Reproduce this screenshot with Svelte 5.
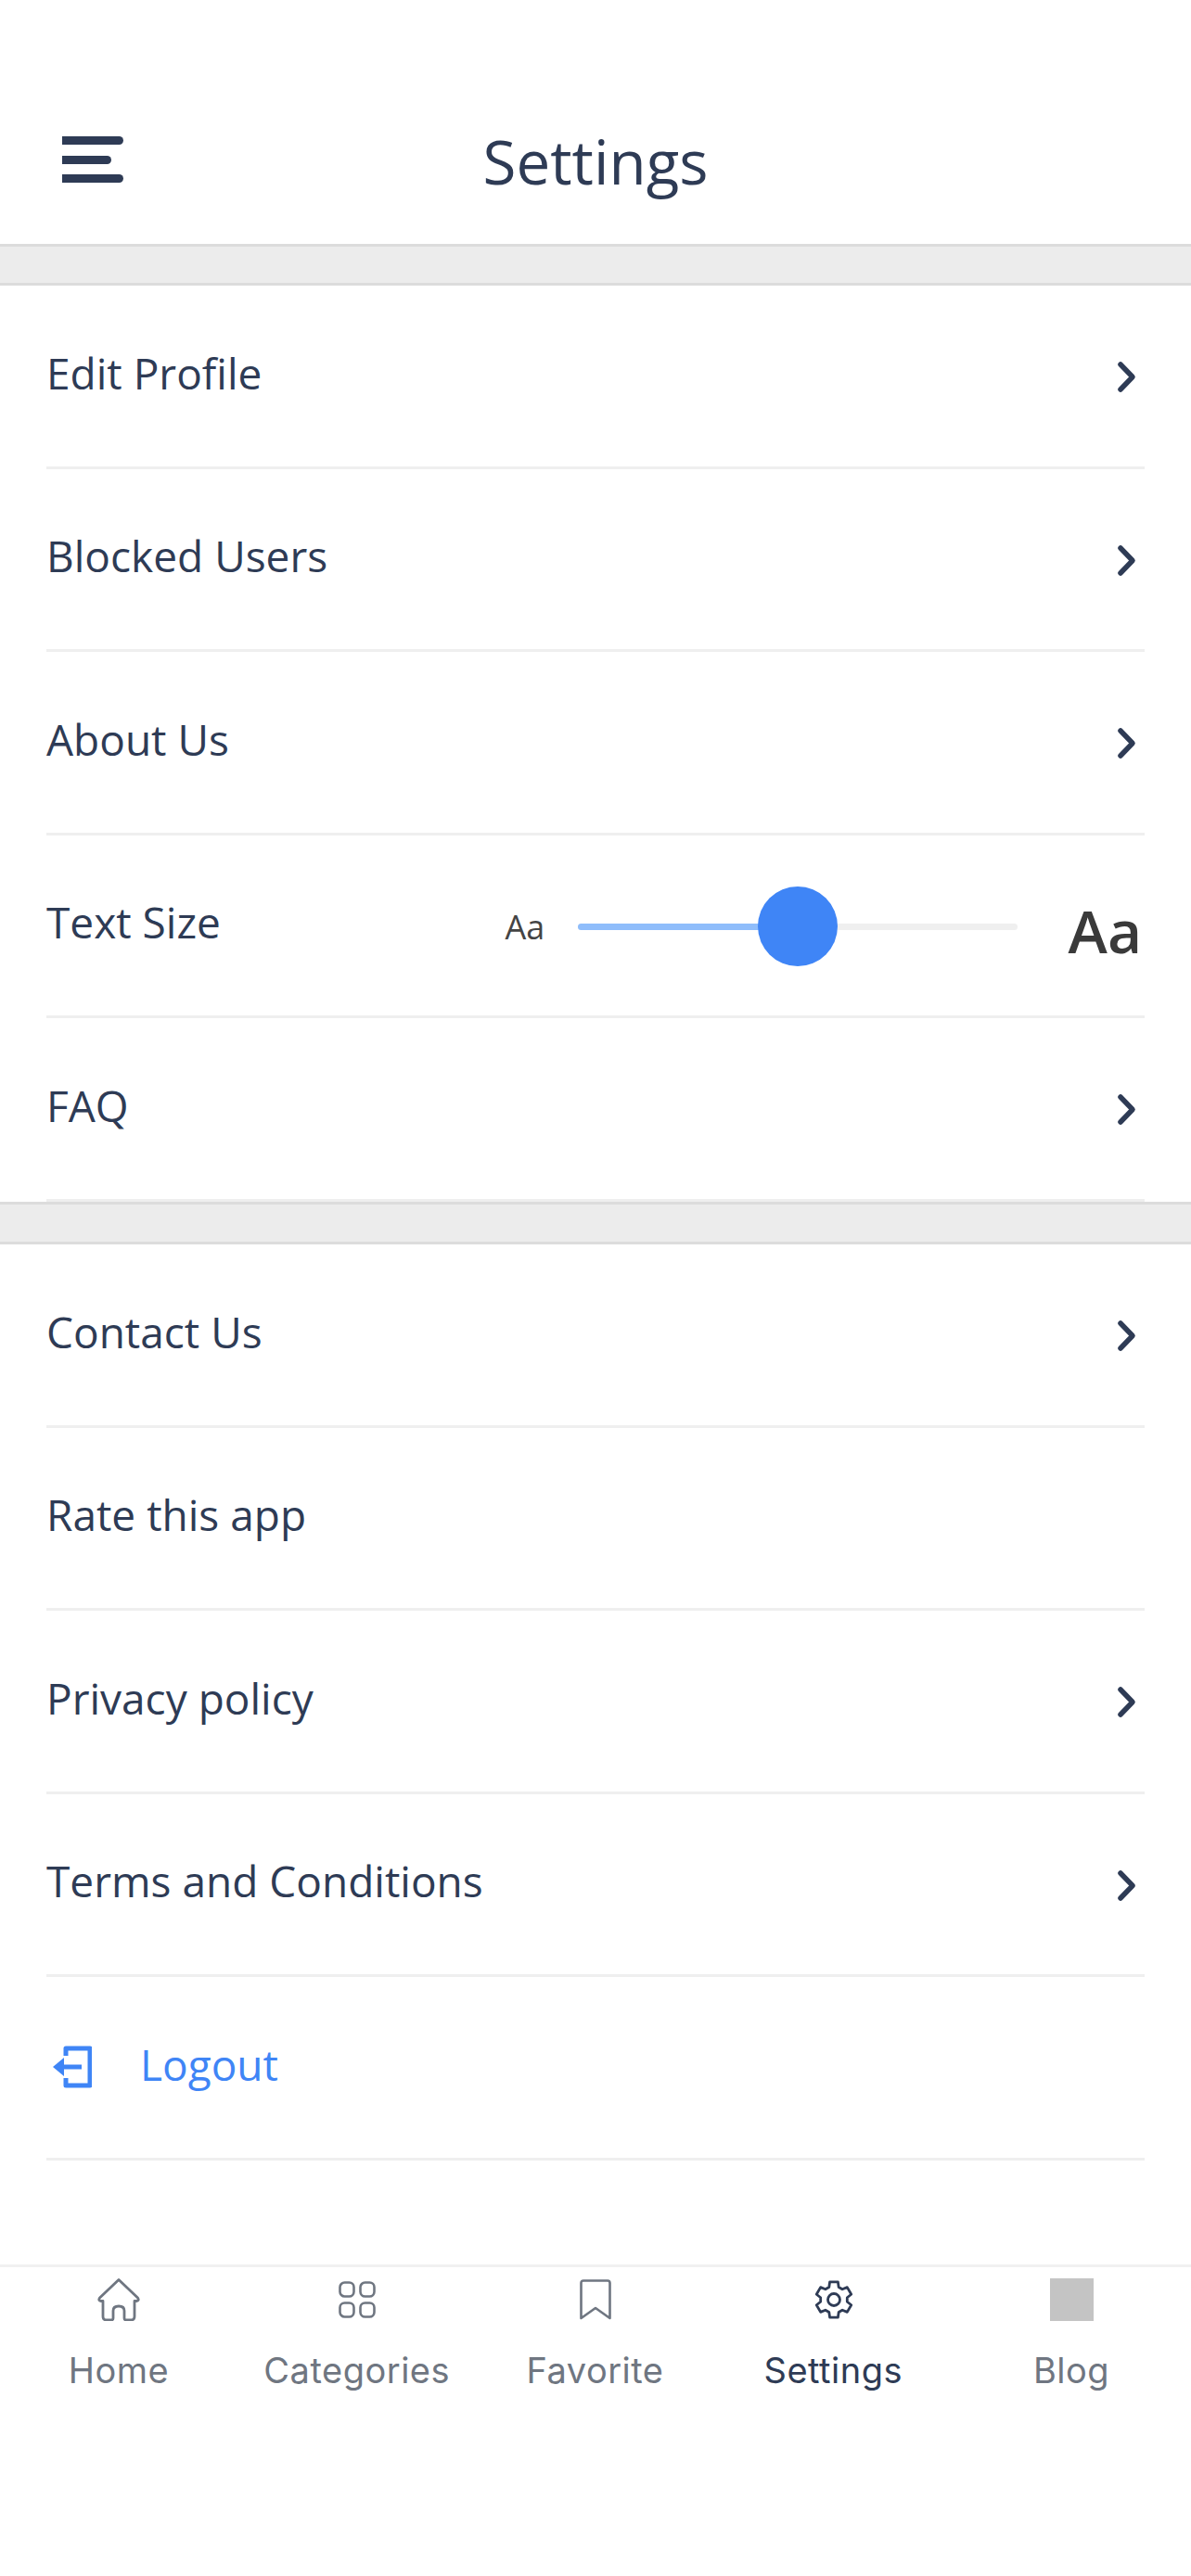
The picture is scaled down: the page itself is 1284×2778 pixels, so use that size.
<script>
    const firstGroup = [
        { label: "Edit Profile", chevron: true },
        { label: "Blocked Users", chevron: true },
        { label: "About Us", chevron: true },
        { label: "Text Size", slider: true },
        { label: "FAQ", chevron: true }
    ];
    const secondGroup = [
        { label: "Contact Us", chevron: true },
        { label: "Rate this app", chevron: false },
        { label: "Privacy policy", chevron: true },
        { label: "Terms and Conditions", chevron: true }
    ];
    const tabs = ["Home", "Categories", "Favorite", "Settings", "Blog"];

    // six toothed cog outline, centred on 21,21
    function cogPath() {
        const point = (r, deg) => {
            const a = (deg * Math.PI) / 180;
            return `${(21 + r * Math.cos(a)).toFixed(2)} ${(21 + r * Math.sin(a)).toFixed(2)}`;
        };
        let d = "";
        for (let i = 0; i < 6; i++) {
            const c = -90 + i * 60;
            d += `${i === 0 ? "M" : "L"}${point(14.5, c - 21)} L${point(19.6, c - 13)} L${point(19.6, c + 13)} L${point(14.5, c + 21)} `;
        }
        return d + "Z";
    }
</script>

{#snippet row(item)}
    <div class="row">
        <span class="row-label">{item.label}</span>
        {#if item.slider}
            <div class="text-size">
                <span class="aa-small">Aa</span>
                <div class="track">
                    <div class="track-fill"></div>
                    <div class="thumb"></div>
                </div>
                <span class="aa-large">Aa</span>
            </div>
        {:else if item.chevron}
            <svg class="chevron" viewBox="0 0 24 39" fill="none">
                <path d="M6 6 L19 19.5 L6 33" stroke="#2e3b55" stroke-width="5.5" stroke-linecap="round" stroke-linejoin="round" />
            </svg>
        {/if}
    </div>
{/snippet}

<div class="page">
    <header class="header">
        <button class="menu" aria-label="Menu">
            <span class="bar"></span>
            <span class="bar short"></span>
            <span class="bar"></span>
        </button>
        <h1>Settings</h1>
    </header>

    <div class="band"></div>
    <section class="group">
        {#each firstGroup as item}
            {@render row(item)}
        {/each}
    </section>

    <div class="band second"></div>
    <section class="group">
        {#each secondGroup as item}
            {@render row(item)}
        {/each}
        <div class="row logout">
            <svg class="logout-icon" viewBox="0 0 42 46" fill="none">
                <path d="M14 11 V3 H40 V43 H14 V35" stroke="#3f85f6" stroke-width="5" stroke-linejoin="round" />
                <path d="M10 23 H31" stroke="#3f85f6" stroke-width="5" />
                <path d="M0 23 L12 13 V33 Z" fill="#3f85f6" />
            </svg>
            <span class="row-label">Logout</span>
        </div>
    </section>

    <nav class="tabbar">
        {#each tabs as tab}
            <div class="tab" class:active={tab === "Settings"}>
                <div class="tab-icon">
                    {#if tab === "Home"}
                        <svg width="46" height="46" viewBox="0 0 46 46" fill="none" stroke="#6f7681" stroke-width="2.8" stroke-linejoin="round" stroke-linecap="round">
                            <path d="M23 1.5 L43.5 21 Q45.5 24 42 24.5 H40 V41 Q40 45 36 45 H31 Q29 45 29 43 V35 Q29 30 23 30 Q17 30 17 35 V43 Q17 45 15 45 H10 Q6 45 6 41 V24.5 H4 Q.5 24 2.5 21 Z" />
                        </svg>
                    {:else if tab === "Categories"}
                        <svg width="40" height="40" viewBox="0 0 40 40" fill="none" stroke="#6f7681" stroke-width="2.6">
                            <rect x="1.5" y="1.5" width="15" height="15" rx="5" />
                            <rect x="23.5" y="1.5" width="15" height="15" rx="5" />
                            <rect x="1.5" y="23.5" width="15" height="15" rx="5" />
                            <rect x="23.5" y="23.5" width="15" height="15" rx="5" />
                        </svg>
                    {:else if tab === "Favorite"}
                        <svg width="34" height="44" viewBox="0 0 34 44" fill="none" stroke="#6f7681" stroke-width="2.6" stroke-linejoin="round">
                            <path d="M1.5 42 V4 Q1.5 1.5 4 1.5 H30 Q32.5 1.5 32.5 4 V42 L17 31 Z" />
                        </svg>
                    {:else if tab === "Settings"}
                        <svg width="42" height="42" viewBox="0 0 42 42" fill="none" stroke="#2e3b55" stroke-width="2.8" stroke-linejoin="round">
                            <path d={cogPath()} />
                            <circle cx="21" cy="21" r="6.5" />
                        </svg>
                    {:else}
                        <div class="blog-square"></div>
                    {/if}
                </div>
                <span class="tab-label">{tab}</span>
            </div>
        {/each}
    </nav>
</div>

<style>
    :global(body) {
        margin: 0;
        background: #fff;
    }
    .page {
        height: 2778px;
        background: #fff;
        font-family: "Open Sans", sans-serif;
        color: #2e3b55;
    }
    .header {
        position: relative;
        height: 263px;
        display: flex;
        align-items: flex-end;
        justify-content: center;
    }
    .header h1 {
        margin: 0 0 44px;
        font-size: 65.5px;
        line-height: 90px;
        font-weight: 400;
    }
    .menu {
        position: absolute;
        left: 67px;
        top: 147px;
        width: 66px;
        padding: 0;
        border: 0;
        background: none;
        display: flex;
        flex-direction: column;
        gap: 11.5px;
    }
    .bar {
        display: block;
        height: 9px;
        width: 66px;
        background: #2e3b55;
        border-radius: 0 5px 5px 0;
    }
    .bar.short {
        width: 53px;
    }
    .band {
        box-sizing: border-box;
        height: 45px;
        background: #ececec;
        border-top: 3px solid #dcdcdc;
        border-bottom: 3px solid #dcdcdc;
    }
    .band.second {
        height: 46.5px;
    }
    .row {
        box-sizing: border-box;
        height: 197.5px;
        margin: 0 50px;
        border-bottom: 3px solid #efefef;
        display: flex;
        align-items: center;
        justify-content: space-between;
    }
    .row-label {
        font-size: 46px;
        line-height: 60px;
        margin-bottom: 7px;
    }
    .chevron {
        width: 24px;
        height: 39px;
        margin-right: 8px;
        margin-top: 3px;
        flex: none;
    }
    .text-size {
        display: flex;
        align-items: center;
        margin-top: 3px;
    }
    .aa-small {
        font-size: 36px;
        line-height: 50px;
        color: #444;
        width: 78px;
        margin-top: 2px;
    }
    .track {
        position: relative;
        width: 474px;
        height: 7px;
        border-radius: 4px;
        background: #efefef;
    }
    .track-fill {
        width: 236px;
        height: 100%;
        border-radius: 4px 0 0 4px;
        background: #8fbdfb;
    }
    .thumb {
        position: absolute;
        left: 194px;
        top: -40px;
        width: 86px;
        height: 86px;
        border-radius: 50%;
        background: #3f85f6;
    }
    .aa-large {
        margin-left: 55px;
        margin-right: 3px;
        margin-top: 10px;
        font-size: 64px;
        line-height: 80px;
        font-weight: 600;
        color: #3a3a3a;
    }
    .logout {
        justify-content: flex-start;
    }
    .logout .row-label {
        color: #3f85f6;
        margin-left: 52px;
    }
    .logout-icon {
        width: 42px;
        height: 46px;
        margin-left: 7px;
    }
    .tabbar {
        margin-top: 112.5px;
        border-top: 3px solid #f1f1f1;
        display: grid;
        grid-template-columns: repeat(5, 1fr);
    }
    .tab {
        display: flex;
        flex-direction: column;
        align-items: center;
        padding-top: 11px;
    }
    .tab-icon {
        height: 48px;
        display: flex;
        align-items: center;
        justify-content: center;
    }
    .blog-square {
        width: 47px;
        height: 46px;
        background: #c4c4c4;
    }
    .tab-label {
        margin-top: 29px;
        margin-right: 1px;
        font-family: Inter, sans-serif;
        font-size: 38px;
        line-height: 46px;
        letter-spacing: 0.5px;
        color: #6f7681;
    }
    .tab.active .tab-label {
        color: #2e3b55;
    }
</style>
